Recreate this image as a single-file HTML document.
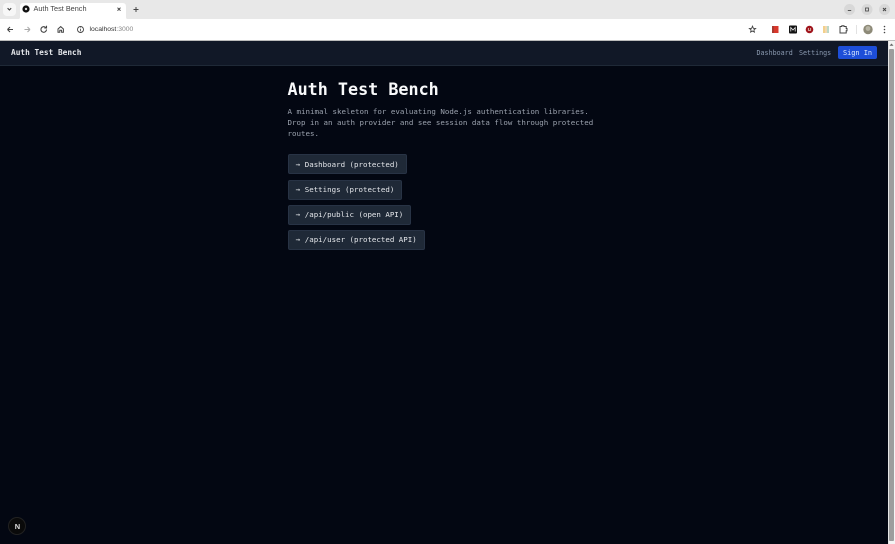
<!DOCTYPE html>
<html><head><meta charset="utf-8"><title>Auth Test Bench</title>
<style>
*{box-sizing:border-box}
html,body{margin:0;padding:0;width:895px;height:544px;overflow:hidden;background:#030712}
body{position:relative;font-family:"DejaVu Sans Mono","Liberation Mono",monospace}
#w{position:absolute;left:0;top:0;width:895px;height:544px;filter:blur(.3px)}
.a{position:absolute;white-space:nowrap}
.ui{font-family:"Liberation Sans","DejaVu Sans",sans-serif}
.btn{position:absolute;left:288px;height:20px;background:#1f2937;border:1px solid #283345;border-radius:2px;color:#e5e7eb;font-size:7.45px;line-height:18px;padding-left:6.8px;white-space:nowrap}
</style></head><body><div id="w">
<!-- tab strip -->
<div class="a" style="left:0;top:0;width:895px;height:19px;background:#e8e8e8"></div>
<div class="a" style="left:3px;top:3px;width:13px;height:13px;background:#f7f7f7;border-radius:4px"></div>
<svg class="a" style="left:0;top:0" width="150" height="19"><path d="M7.600 8.200 9.400 10l1.800-1.800" fill="none" stroke="#444" stroke-width="1.100"/>
<path d="M18 19c2 0 2-1 2-3V7c0-3 1-4 4-4h98c3 0 4 1 4 4v9c0 2 0 3 2 3z" fill="#fff"/>
<circle cx="26" cy="9" r="3.600" fill="#111"/><circle cx="26" cy="9" r="1.200" fill="#ddd"/>
<path d="M117.500 7.700l3 3m0-3l-3 3" stroke="#444" stroke-width="1"/>
<path d="M136 7v5m-2.500-2.500h5" stroke="#444" stroke-width="1"/></svg>
<div class="a ui" style="left:33.500px;top:4px;font-size:7.300px;line-height:10px;color:#444">Auth Test Bench</div>
<svg class="a" style="left:835px;top:0" width="60" height="19">
<circle cx="14.500" cy="9.500" r="5.500" fill="#d8d8d8"/><circle cx="32" cy="9.500" r="5.500" fill="#d8d8d8"/><circle cx="49.500" cy="9.500" r="5.500" fill="#d8d8d8"/>
<path d="M12.800 10.500h3.400" stroke="#555"/><rect x="30.500" y="8" width="3" height="3" fill="none" stroke="#555" stroke-width=".9"/>
<path d="M48 8l3 3m0-3l-3 3" stroke="#444" stroke-width="1"/></svg>
<!-- toolbar -->
<div class="a" style="left:0;top:19px;width:895px;height:21px;background:#fff"></div>
<div class="a" style="left:0;top:40px;width:895px;height:1px;background:#bcbcbc"></div>
<svg class="a" style="left:0;top:19px" width="100" height="21">
<path d="M7.500 10.500h5.500M7.500 10.500l2.500-2.500M7.500 10.500l2.500 2.500" fill="none" stroke="#444" stroke-width="1.100"/>
<path d="M30 10.500h-5.500M30 10.500l-2.500-2.500M30 10.500l-2.500 2.500" fill="none" stroke="#aaa" stroke-width="1.100"/>
<path d="M46.500 10.500a2.800 2.800 0 1 1-.8-2M46.500 6.800v2.200h-2.200" fill="none" stroke="#444" stroke-width="1.100"/>
<path d="M58 10l2.700-2.400 2.700 2.400v3.200h-1.800v-2h-1.800v2h-1.800z" fill="none" stroke="#444" stroke-width="1"/>
<circle cx="80.500" cy="10.500" r="3" fill="none" stroke="#444" stroke-width=".9"/><path d="M80.500 10v2.200M80.500 8.500v.8" stroke="#444" stroke-width=".8"/>
</svg>
<div class="a ui" style="left:89.500px;top:25px;font-size:6.800px;line-height:10px;color:#333">localhost<span style="color:#888">:3000</span></div>
<svg class="a" style="left:745px;top:19px" width="150" height="21">
<path d="M7.500 7.200l.9 2.100 2.200.2-1.700 1.400.5 2.200-1.900-1.100-1.900 1.100.5-2.200-1.700-1.400 2.200-.2z" fill="none" stroke="#444" stroke-width=".9"/>
<rect x="27" y="7" width="6.500" height="7" fill="#d8382c"/><rect x="27" y="7" width="2" height="7" fill="#a83a30"/>
<rect x="44" y="6.500" width="8" height="8" rx="1" fill="#111"/><path d="M45.800 12.500v-4l2.200 2.500 2.200-2.500v4" fill="none" stroke="#eee" stroke-width=".8"/>
<circle cx="64.500" cy="10.500" r="3.800" fill="#a0141c"/><path d="M63.300 9v2.300h2.400V9" fill="none" stroke="#eed" stroke-width=".7"/>
<rect x="78" y="7" width="2" height="7" fill="#f2d08c"/><rect x="80" y="7" width="2" height="7" fill="#f3d9b0"/><rect x="82" y="7" width="2" height="7" fill="#bcd8c8"/>
<path d="M95 7.500h1.800v-.8h2.200v.8h2.200v2h.8v2.200h-.8v2.300h-6.200z" fill="none" stroke="#444" stroke-width="1"/>
<rect x="111" y="6" width="1" height="9" fill="#e2e2e2"/>
<circle cx="123" cy="10.500" r="4.700" fill="#8d8a78"/><circle cx="123" cy="9.500" r="2.400" fill="#b7b4a4"/>
<circle cx="139.500" cy="7.500" r=".8" fill="#444"/><circle cx="139.500" cy="10.500" r=".8" fill="#444"/><circle cx="139.500" cy="13.500" r=".8" fill="#444"/>
</svg>
<!-- page nav -->
<div class="a" style="left:0;top:41px;width:888px;height:25px;background:#111827;border-bottom:1px solid #1f2937"></div>
<div class="a" style="left:11px;top:47px;font-size:7.800px;line-height:11px;font-weight:700;color:#e5e7eb">Auth Test Bench</div>
<div class="a" style="left:756.500px;top:48px;font-size:6.700px;line-height:10px;color:#8b9ab0">Dashboard</div>
<div class="a" style="left:799px;top:48px;font-size:6.700px;line-height:10px;color:#8b9ab0">Settings</div>
<div class="a" style="left:838px;top:46px;width:39px;height:13px;background:#1d4ed8;border-radius:2px;color:#dbeafe;font-size:6.900px;line-height:14px;text-align:center">Sign In</div>
<!-- main -->
<div class="a" style="left:287.500px;top:79px;font-size:16.750px;line-height:20px;font-weight:700;color:#f9fafb">Auth Test Bench</div>
<div class="a" style="left:287.500px;top:106px;font-size:7.470px;line-height:11.200px;color:#9ca3af">A minimal skeleton for evaluating Node.js authentication libraries.<br>Drop in an auth provider and see session data flow through protected<br>routes.</div>
<div class="btn" style="top:154px;width:119px;line-height:19px">→ Dashboard (protected)</div>
<div class="btn" style="top:179.500px;width:114px">→ Settings (protected)</div>
<div class="btn" style="top:204.500px;width:123px">→ /api/public (open API)</div>
<div class="btn" style="top:229.800px;width:137px">→ /api/user (protected API)</div>
<!-- next badge -->
<div class="a" style="left:8px;top:517px;width:18px;height:18px;border-radius:50%;background:#0a0a0a;border:1px solid #222"></div>
<div class="a ui" style="left:8.500px;top:518px;width:18px;height:18px;text-align:center;color:#ddd;font-size:7.500px;font-weight:700;line-height:18px">N</div>
<!-- scrollbar -->
<div class="a" style="left:888px;top:41px;width:7px;height:503px;background:#f4f4f4;border-left:1px solid #e6e6e6"></div>
<div class="a" style="left:889px;top:49px;width:5px;height:492px;background:#9d9d9d;border-radius:1px"></div>
<svg class="a" style="left:888px;top:41px" width="7" height="7"><path d="M3.500 2.500l-2 2.200h4z" fill="#666"/></svg>
</div></body></html>
